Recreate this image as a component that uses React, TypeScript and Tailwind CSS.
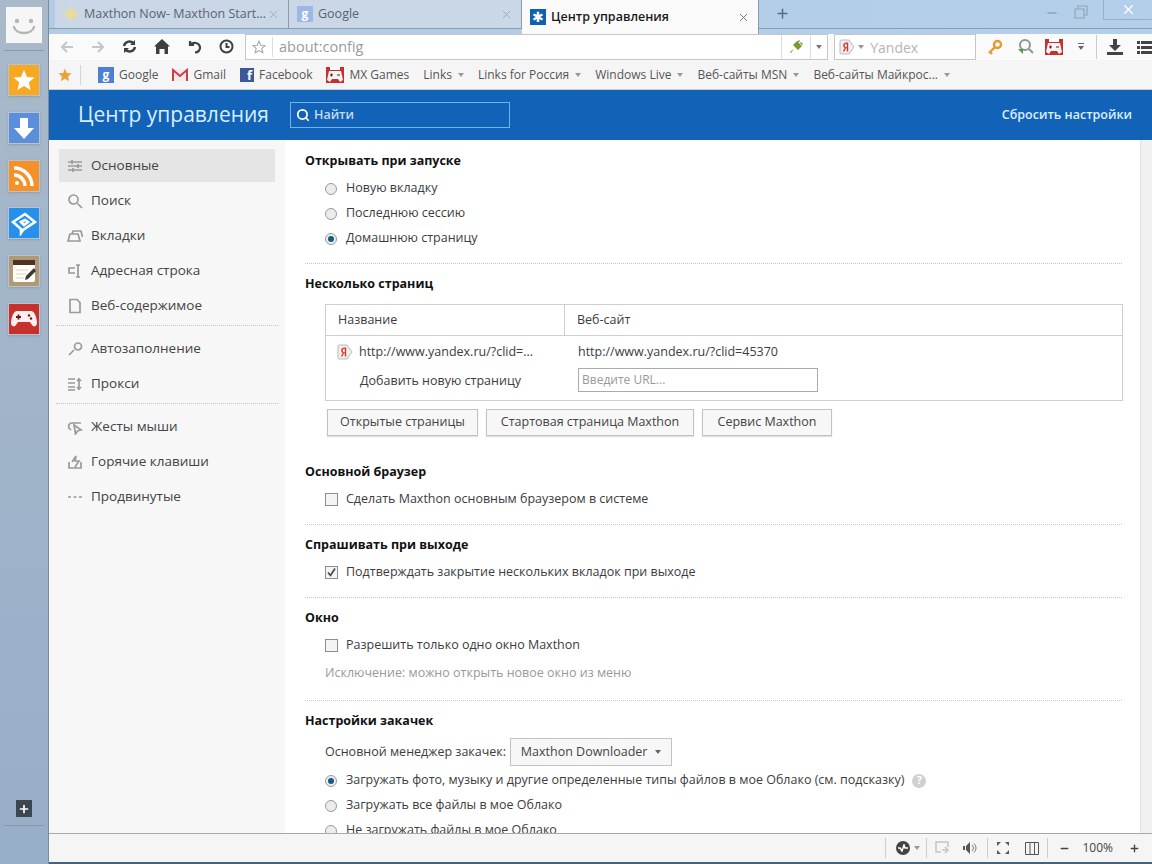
import { ChevronDown, Search, X, Plus, Minus } from 'lucide-react';

const FONT = "font-['Open_Sans','Noto_Sans',sans-serif]";

const Caret = ({ className = 'border-t-[#8a8a8a]' }: { className?: string }) => (
  <span className={`inline-block w-0 h-0 border-x-[3.5px] border-x-transparent border-t-[4px] ${className}`} />
);

const YandexIcon = ({ size = 16 }: { size?: number }) => (
  <svg width={size} height={size} viewBox="0 0 16 16">
    <path d="M1 2.5A1.5 1.5 0 0 1 2.5 1H10l5 7-5 7H2.5A1.5 1.5 0 0 1 1 13.5z" fill="#eee" stroke="#bbb" />
    <path d="M9.2 3.5v9H7.8V9.3H7L5.3 12.5H3.8l1.9-3.5C4.7 8.5 4.2 7.7 4.2 6.5c0-2 1.3-3 3-3zM7.8 4.7h-.5c-1 0-1.6.6-1.6 1.8s.6 1.8 1.6 1.8h.5z" fill="#d8362a" />
  </svg>
);

const MxGames = ({ size = 18 }: { size?: number }) => (
  <svg width={size} height={size} viewBox="0 0 18 18">
    <rect x="0" y="1" width="18" height="16" fill="#c9302c" />
    <rect x="4" y="1" width="10" height="3" fill="#fff" />
    <path d="M3 5h12l2 9-3 2-2-3H6l-2 3-3-2z" fill="#f4f4f4" />
    <path d="M4 9h3M5.5 7.5v3M11 9h3" stroke="#7a1512" strokeWidth="1.2" />
  </svg>
);

const Tab = ({ icon, title, active, width }: { icon: React.ReactNode; title: string; active?: boolean; width: string }) => (
  <div className={`${width} flex items-center pl-2 pr-2 border-r border-[#8d9aa8] ${active ? 'h-[34px] bg-[#fafafa] self-start' : 'h-[28px] bg-[#c9d7e6]'}`}>
    <span className="w-4 h-4 mr-[5px] shrink-0 flex items-center justify-center">{icon}</span>
    <span className={`flex-1 truncate text-[12.5px] ${active ? 'font-semibold text-[#1a1a1a]' : 'text-[#5c6470]'}`}>{title}</span>
    <X size={13} strokeWidth={1.6} className={active ? 'text-[#666]' : 'text-[#9aa5b1]'} />
  </div>
);

const RailIcon = ({ bg, mt, children }: { bg: string; mt: string; children: React.ReactNode }) => (
  <div className={`${bg} ${mt} w-8 h-8 border border-[#b9c3cf] flex items-center justify-center shrink-0 shadow-sm`}>{children}</div>
);

const Bookmark = ({ icon, label, caret }: { icon?: React.ReactNode; label: string; caret?: boolean }) => (
  <div className="flex items-center gap-[5px] text-[12px] text-[#555] whitespace-nowrap">
    {icon}
    <span>{label}</span>
    {caret && <Caret className="border-t-[#999] ml-[1px]" />}
  </div>
);

const SideIcon = ({ d }: { d: string }) => (
  <svg width="16" height="16" viewBox="0 0 16 16" fill="none" stroke="#9a9a9a" strokeWidth="1.7">
    <path d={d} />
  </svg>
);

const SideItem = ({ d, label, active }: { d: string; label: string; active?: boolean }) => (
  <div className={`h-[33px] mb-[2px] flex items-center pl-2 gap-[8px] text-[13.5px] text-[#444] ${active ? 'bg-[#e5e5e5]' : ''}`}>
    <SideIcon d={d} />
    <span>{label}</span>
  </div>
);

const Radio = ({ on, label }: { on?: boolean; label: string }) => (
  <div className="h-[25px] flex items-center pl-[20px] gap-[9px] whitespace-nowrap">
    <span className={`w-3 h-3 rounded-full border border-[#9a9a9a] flex items-center justify-center shrink-0 ${on ? 'bg-[#e8eef2]' : 'bg-[#ececec]'}`}>
      {on && <span className="w-[6px] h-[6px] rounded-full bg-[#175a80]" />}
    </span>
    <span>{label}</span>
  </div>
);

const Check = ({ on, label }: { on?: boolean; label: string }) => (
  <div className="h-[25px] flex items-center pl-[20px] gap-[8px]">
    <span className="w-[13px] h-[13px] border border-[#8e8e8e] bg-[#f4f4f4] flex items-center justify-center shrink-0">
      {on && (
        <svg width="11" height="11" viewBox="0 0 11 11" fill="none" stroke="#444" strokeWidth="1.6">
          <path d="M2 5.5l2.5 3L9 1.5" />
        </svg>
      )}
    </span>
    <span>{label}</span>
  </div>
);

const Title = ({ children }: { children: React.ReactNode }) => (
  <div className="h-[20px] leading-[20px] font-bold text-[#111] text-[12.5px]">{children}</div>
);

const Divider = ({ className }: { className: string }) => <div className={`border-t border-dotted border-[#c4c4c4] mr-[18px] ${className}`} />;

const Btn = ({ label, width }: { label: string; width: string }) => (
  <div className={`${width} h-[27px] flex items-center justify-center border border-[#c2c2c2] bg-[#f7f7f7] shadow-[0_1px_1px_rgba(0,0,0,0.12)] text-[#444]`}>{label}</div>
);

export default function App() {
  return (
    <div className={`${FONT} w-[1152px] h-[864px] overflow-hidden flex bg-white text-[13px] text-[#333]`}>
      {/* left rail */}
      <div className="w-[49px] h-full shrink-0 border-r border-[#7c8a9a] flex flex-col items-center bg-gradient-to-b from-[#a9b9ca] to-[#97aec8]">
        <div className="mt-[7px] w-9 h-9 bg-[#f6f6f6] flex items-center justify-center shrink-0">
          <svg width="30" height="30" viewBox="0 0 30 30" fill="none" stroke="#b5b5b5" strokeWidth="2.4" strokeLinecap="round">
            <circle cx="8" cy="11" r="1" />
            <circle cx="22" cy="11" r="1" />
            <path d="M5 17c2 8 18 8 20 0" />
          </svg>
        </div>
        <div className="mt-[7px] w-10 border-t border-[#8a9aac]" />
        <RailIcon bg="bg-[#f9a91f]" mt="mt-[13px]">
          <svg width="24" height="24" viewBox="0 0 24 24" fill="#fff"><path d="M12 2l3 7 7.5.6-5.7 4.9 1.8 7.4L12 18l-6.6 3.9 1.8-7.4L1.5 9.6 9 9z" /></svg>
        </RailIcon>
        <RailIcon bg="bg-[#5b8fdc]" mt="mt-[16px]">
          <svg width="24" height="24" viewBox="0 0 24 24" fill="#fff"><path d="M8 2h8v10h6L12 23 2 12h6z" /></svg>
        </RailIcon>
        <RailIcon bg="bg-[#f59127]" mt="mt-[16px]">
          <svg width="26" height="26" viewBox="0 0 26 26" fill="none" stroke="#fff" strokeWidth="3.4">
            <circle cx="6" cy="20" r="2" fill="#fff" stroke="none" />
            <path d="M3 12a11 11 0 0 1 11 11M3 5a18 18 0 0 1 18 18" />
          </svg>
        </RailIcon>
        <RailIcon bg="bg-[#2690ea]" mt="mt-[15px]">
          <svg width="26" height="26" viewBox="0 0 26 26" fill="none" stroke="#fff" strokeWidth="2.6">
            <path d="M2 12L14 4l10 8-12 8-2 3v-4z" />
            <path d="M10 12l4-2 3 2-4 3z" />
          </svg>
        </RailIcon>
        <RailIcon bg="bg-[#b09a75]" mt="mt-[16px]">
          <svg width="26" height="26" viewBox="0 0 26 26">
            <rect x="2" y="2" width="22" height="22" rx="2" fill="#fffdf6" />
            <path d="M2 2h22v5H2z" fill="#4a3426" />
            <path d="M5 12h12M5 16h10M5 20h8" stroke="#d9d2c2" />
            <path d="M14 22l1-4 8-8 2 3-8 8z" fill="#3a3a3a" />
          </svg>
        </RailIcon>
        <RailIcon bg="bg-[#c8302c]" mt="mt-[16px]">
          <svg width="28" height="22" viewBox="0 0 28 22">
            <path d="M7 3h14c3 0 5 4 6 11 .5 4-3 6-5 3l-2-3H8l-2 3c-2 3-5.500 1-5-3C2 7 4 3 7 3z" fill="#fbeeee" />
            <path d="M6 9h5M8.500 6.500v5" stroke="#7a1512" strokeWidth="1.8" />
            <circle cx="19" cy="7.500" r="1.200" fill="#7a1512" />
            <circle cx="21" cy="10.500" r="1.200" fill="#7a1512" />
          </svg>
        </RailIcon>
        <div className="mt-auto w-4 h-[17px] bg-[#3c4650] flex items-center justify-center">
          <Plus size={12} strokeWidth={3.4} className="text-white" />
        </div>
        <div className="mt-[8px] w-10 border-t border-[#8a9aac]" />
        <div className="h-[38px]" />
      </div>

      <div className="flex-1 min-w-0 flex flex-col h-full">
        {/* tab strip */}
        <div className="relative h-[34px] shrink-0 flex pl-[6px] bg-gradient-to-r from-[#b3cce6] to-[#b3cfea]">
          <div className="absolute left-0 right-0 top-[28px] border-t border-[#8d9aa8]" />
          <div className="relative flex w-full">
            <Tab
              width="w-[234px]"
              title="Maxthon Now- Maxthon Start Pa..."
              icon={<svg width="16" height="16" viewBox="0 0 16 16"><circle cx="8" cy="8" r="4" fill="#f2dc8c" /><path d="M8 0v3M8 13v3M0 8h3M13 8h3M2.300 2.300l2 2M11.700 11.700l2 2M2.300 13.700l2-2M11.700 4.300l2-2" stroke="#f2dc8c" strokeWidth="1.500" /></svg>}
            />
            <Tab
              width="w-[233px]"
              title="Google"
              icon={<span className="w-4 h-4 bg-[#9db8e8] text-white text-[12px] font-bold flex items-center justify-center">g</span>}
            />
            <Tab
              active
              width="w-[237px]"
              title="Центр управления"
              icon={<span className="w-4 h-4 bg-[#0f5fb5] flex items-center justify-center text-white text-[14px] leading-none">✱</span>}
            />
            <Plus size={15} strokeWidth={2.400} className="ml-[16px] mt-[6px] text-[#5d6b7a]" />
            <div className="ml-auto flex items-start text-[#8fa3b8]">
              <Minus size={14} strokeWidth={2.400} className="mt-[6px]" />
              <svg width="14" height="14" viewBox="0 0 14 14" fill="none" stroke="#8fa3b8" strokeWidth="1.200" className="ml-[15px] mt-[5px]">
                <path d="M1 4h9v9H1zM4 4V1h9v9h-3" />
              </svg>
              <div className="ml-[15px] w-[49px] h-[20px] border-l border-b border-[#98afc6] flex items-center justify-center">
                <X size={15} strokeWidth={2.200} className="text-white" />
              </div>
            </div>
          </div>
        </div>

        {/* nav bar */}
        <div className="h-[26px] shrink-0 flex items-center bg-[#fafafa] pl-[11px]">
          <div className="flex items-center gap-[17px] -mt-[1px]">
            <svg width="14" height="14" viewBox="0 0 14 14" fill="none" stroke="#c4c8cc" strokeWidth="2.200"><path d="M13 7H2M7 2L2 7l5 5" /></svg>
            <svg width="14" height="14" viewBox="0 0 14 14" fill="none" stroke="#c4c8cc" strokeWidth="2.200"><path d="M1 7h11M7 2l5 5-5 5" /></svg>
            <svg width="15" height="15" viewBox="0 0 15 15" fill="none" stroke="#3f3f3f" strokeWidth="2.400"><path d="M2 7a5.500 5.500 0 0 1 10-2M13 8a5.500 5.500 0 0 1-10 2" /><path d="M13 1v5H8zM2 14V9h5z" fill="#3f3f3f" stroke="none" /></svg>
            <svg width="16" height="15" viewBox="0 0 16 15" fill="#3f3f3f"><path d="M8 0l8 7.500h-2V15h-3.500v-5h-5v5H2V7.500H0z" /></svg>
            <svg width="15" height="15" viewBox="0 0 15 15" fill="none" stroke="#3f3f3f" strokeWidth="2.200"><path d="M3 2v4h4M3 6c2-3 9-3 10 2 .5 3-2 5.500-5 5.500" /></svg>
            <svg width="15" height="15" viewBox="0 0 15 15" fill="none" stroke="#3f3f3f" strokeWidth="2"><circle cx="7.500" cy="7.500" r="6" /><path d="M7.500 4v4h3" /></svg>
          </div>
          <div className="ml-[11px] w-[584px] h-[26px] flex items-center border border-[#c6c6c6] bg-white">
            <svg width="14" height="14" viewBox="0 0 24 24" fill="none" stroke="#a5a5a5" strokeWidth="1.800" className="ml-[6px]"><path d="M12 2l3 7 7.500.6-5.700 4.900 1.800 7.400L12 18l-6.600 3.900 1.800-7.400L1.500 9.600 9 9z" /></svg>
            <span className="ml-[6px] h-[20px] border-l border-[#ddd]" />
            <span className="ml-[6px] text-[14.5px] text-[#9a9a9a]">about:config</span>
            <span className="ml-auto h-[24px] border-l border-[#ddd]" />
            <svg width="16" height="16" viewBox="0 0 16 16" className="mx-[6px]" fill="#7c9a31"><path d="M9 2l5 5-4 4-5-5zM6 10l-3 4-1-1 4-3zM11 1l1 1-2 2-1-1zM15 5l-1 1-2-2 1-1z" /></svg>
            <span className="h-[24px] border-l border-[#ddd]" />
            <span className="mx-[5px] flex"><Caret className="border-t-[#777]" /></span>
          </div>
          <div className="ml-[6px] w-[142px] h-[26px] flex items-center border border-[#c6c6c6] bg-white pl-[4px]">
            <YandexIcon />
            <span className="ml-[3px] flex"><Caret className="border-t-[#999]" /></span>
            <span className="ml-[6px] text-[14px] text-[#b5b5b5]">Yandex</span>
          </div>
          <div className="ml-[11px] flex items-center">
            <svg width="16" height="16" viewBox="0 0 16 16" fill="none" stroke="#e59a2d" strokeWidth="2.400"><circle cx="10.500" cy="5.500" r="3.500" /><path d="M8 8l-6 6M3 13l2 2" /></svg>
            <svg width="18" height="18" viewBox="0 0 18 18" fill="none" stroke="#8a9a90" strokeWidth="2" className="ml-[13px]"><circle cx="9" cy="7" r="5" /><path d="M13 11l4 4" /><path d="M2 11h5v5z" fill="#4f9a3c" stroke="none" /></svg>
            <span className="ml-[11px]"><MxGames /></span>
            <svg width="8" height="8" viewBox="0 0 8 8" fill="#666" className="ml-[14px]"><path d="M1 0h6v1H1zM1 3h6L4 7z" /></svg>
            <span className="ml-[11px] h-[24px] border-l border-[#ccc]" />
            <svg width="16" height="16" viewBox="0 0 16 16" fill="#444" className="ml-[10px]"><path d="M6 0h4v6h4l-6 6-6-6h4zM0 13h16v3H0z" /></svg>
            <svg width="15" height="13" viewBox="0 0 15 13" fill="#444" className="ml-[14px]"><path d="M0 0h3v3H0zM4 0h11v3H4zM0 5h3v3H0zM4 5h11v3H4zM0 10h3v3H0zM4 10h11v3H4z" /></svg>
          </div>
        </div>

        {/* bookmarks */}
        <div className="h-[30px] shrink-0 flex items-center gap-[14px] bg-[#f5f5f5] pl-[9px] border-b border-[#c9ced3]">
          <svg width="14" height="14" viewBox="0 0 24 24" fill="#e9a33d" className="-mr-[1px]"><path d="M12 1l3.300 7.500 8 .7-6 5.300 1.800 8L12 18.300 4.900 22.500l1.800-8-6-5.300 8-.7z" /></svg>
          <span className="h-[20px] border-l border-[#d5d5d5] -ml-[5px] mr-[3px]" />
          <Bookmark label="Google" icon={<span className="w-4 h-4 bg-[#4d7fd8] text-white text-[12px] font-bold flex items-center justify-center">g</span>} />
          <Bookmark label="Gmail" icon={<svg width="16" height="14" viewBox="0 0 16 14"><rect y="1" width="16" height="12" fill="#f3eaea" /><path d="M1 13V2l7 6 7-6v11" fill="none" stroke="#cc3d4e" strokeWidth="2" /></svg>} />
          <Bookmark label="Facebook" icon={<span className="w-[14px] h-[14px] bg-[#3b5998] text-white text-[13px] font-bold flex items-end justify-end pr-[2px] leading-none">f</span>} />
          <Bookmark label="MX Games" icon={<MxGames />} />
          <Bookmark label="Links" caret />
          <Bookmark label="Links for Россия" caret />
          <Bookmark label="Windows Live" caret />
          <Bookmark label="Веб-сайты MSN" caret />
          <Bookmark label="Веб-сайты Майкрос..." caret />
        </div>

        {/* header */}
        <div className="h-[50px] shrink-0 bg-[#1262b8] flex items-center pl-[29px] pr-[20px]">
          <span className="w-[212px] text-[21px] text-[#d8efff] whitespace-nowrap">Центр управления</span>
          <div className="w-[220px] h-[26px] border border-[#6db4ea] flex items-center pl-[5px] gap-[4px]">
            <Search size={14} strokeWidth={3} className="text-white" />
            <span className="text-[12.5px] text-[#c4dcf2] font-semibold">Найти</span>
          </div>
          <span className="ml-auto text-[#dcefff] text-[12.5px] font-semibold">Сбросить настройки</span>
        </div>

        {/* body */}
        <div className="flex-1 min-h-0 flex">
          <div className="w-[236px] shrink-0 bg-[#f7f7f7] pl-[10px] pr-[10px] pt-[9px]">
            <SideItem active label="Основные" d="M1 4h14M1 8h14M1 12h14M5 2v4M11 6v4M6 10v4" />
            <SideItem label="Поиск" d="M10.500 10.500L15 15M11 6.500a4.500 4.500 0 1 1-9 0 4.500 4.500 0 0 1 9 0z" />
            <SideItem label="Вкладки" d="M1 13l2-7h8l2 7zM5 6l1-3h8l1.500 6" />
            <SideItem label="Адресная строка" d="M11 2v12M9 2h4M9 14h4M8 5H2v5h6" />
            <SideItem label="Веб-содержимое" d="M3 1.500h7l3 3V14.500H3z" />
            <div className="mt-[3px] mb-[6px] border-t border-dotted border-[#c4c4c4] -mx-[3px]" />
            <SideItem label="Автозаполнение" d="M7 9l-5 5M11 2a3.500 3.500 0 1 1 0 7 3.500 3.500 0 0 1 0-7z" />
            <SideItem label="Прокси" d="M1 3h7M1 7h7M1 11h7M1 14h7M12 2v12M10 5l2-2 2 2M10 11l2 2 2-2" />
            <div className="mt-[3px] mb-[6px] border-t border-dotted border-[#c4c4c4] -mx-[3px]" />
            <SideItem label="Жесты мыши" d="M14 4H5C2 4 1 7 2 9l2 2M7 6l1.500 9 2-3 3.500-1z" />
            <SideItem label="Горячие клавиши" d="M2 8v6h12V8M5 8l4-6-1 5h4l-4 6" />
            <SideItem label="Продвинутые" d="M1 8h3M6.500 8h3M12 8h3" />
          </div>

          <div className="flex-1 min-w-0 overflow-hidden pl-[20px] pt-[11px] text-[#3c3c3c] text-[12.5px]">
            <Title>Открывать при запуске</Title>
            <div className="mt-[5px]">
              <Radio label="Новую вкладку" />
              <Radio label="Последнюю сессию" />
              <Radio on label="Домашнюю страницу" />
            </div>
            <Divider className="mt-[12px] mb-[10px]" />
            <Title>Несколько страниц</Title>
            <div className="ml-[20px] mr-[17px] mt-[10px] border border-[#cfcfcf] h-[97px]">
              <div className="h-[31px] flex items-center border-b border-[#cfcfcf]">
                <span className="w-[239px] h-full flex items-center pl-[12px] border-r border-[#cfcfcf]">Название</span>
                <span className="pl-[12px]">Веб-сайт</span>
              </div>
              <div className="h-[32px] flex items-center">
                <div className="w-[240px] flex items-center pl-[11px] gap-[6px]">
                  <YandexIcon />
                  <span className="truncate w-[179px]">http://www.yandex.ru/?clid=453...</span>
                </div>
                <span className="pl-[12px]">http://www.yandex.ru/?clid=45370</span>
              </div>
              <div className="flex items-start">
                <span className="w-[240px] pl-[34px] leading-[30px] -mt-[2px]">Добавить новую страницу</span>
                <div className="ml-[12px] w-[240px] h-[24px] border border-[#aaa] flex items-center pl-[3px] text-[12px] text-[#999]">Введите URL...</div>
              </div>
            </div>
            <div className="ml-[22px] mt-[8px] flex gap-[8px]">
              <Btn width="w-[151px]" label="Открытые страницы" />
              <Btn width="w-[208px]" label="Стартовая страница Maxthon" />
              <Btn width="w-[130px]" label="Сервис Maxthon" />
            </div>
            <div className="mt-[26px]"><Title>Основной браузер</Title></div>
            <div className="mt-[5px]"><Check label="Сделать Maxthon основным браузером в системе" /></div>
            <Divider className="mt-[12px] mb-[10px]" />
            <Title>Спрашивать при выходе</Title>
            <div className="mt-[5px]"><Check on label="Подтверждать закрытие нескольких вкладок при выходе" /></div>
            <Divider className="mt-[12px] mb-[10px]" />
            <Title>Окно</Title>
            <div className="mt-[5px]"><Check label="Разрешить только одно окно Maxthon" /></div>
            <div className="pl-[20px] h-[29px] leading-[29px] text-[#999]">Исключение: можно открыть новое окно из меню</div>
            <Divider className="mt-[13px] mb-[10px]" />
            <Title>Настройки закачек</Title>
            <div className="pl-[20px] mt-[7px] h-[28px] flex items-center gap-[4px]">
              <span>Основной менеджер закачек:</span>
              <div className="w-[162px] h-[28px] border border-[#c2c2c2] bg-[#f7f7f7] flex items-center justify-center gap-[8px] text-[#444]">
                Maxthon Downloader <Caret className="border-t-[#666]" />
              </div>
            </div>
            <div className="mt-[2px]">
              <div className="flex items-center">
                <Radio on label="Загружать фото, музыку и другие определенные типы файлов в мое Облако (см. подсказку)" />
                <span className="ml-[8px] w-[14px] h-[14px] rounded-full bg-[#d0d0d0] text-white text-[11px] font-bold flex items-center justify-center">?</span>
              </div>
              <Radio label="Загружать все файлы в мое Облако" />
              <Radio label="Не загружать файлы в мое Облако" />
            </div>
          </div>

          <div className="w-[12px] shrink-0 bg-[#f1f1f1] border-l border-[#e2e2e2]" />
        </div>

        {/* status bar */}
        <div className="h-[29px] shrink-0 border-t border-[#a8a8a8] bg-[#f5f5f5] flex items-center justify-end pr-[12px] text-[#444]">
          <span className="h-[20px] border-l border-[#ccc]" />
          <span className="ml-[10px] w-[14px] h-[14px] rounded-full bg-[#444] flex items-center justify-center">
            <svg width="10" height="8" viewBox="0 0 10 8" fill="none" stroke="#fff" strokeWidth="1.500"><path d="M0 4h2l2 3 2-6 1 3h3" /></svg>
          </span>
          <span className="ml-[4px] flex"><Caret className="border-t-[#999]" /></span>
          <span className="ml-[6px] h-[20px] border-l border-[#ccc]" />
          <svg width="14" height="14" viewBox="0 0 14 14" fill="none" stroke="#c4c4c4" strokeWidth="1.500" className="ml-[8px]"><path d="M13 6V1H1v10h5M7 9h6M10 6l3 3-3 3" /></svg>
          <svg width="16" height="12" viewBox="0 0 16 12" fill="#555" className="ml-[14px]"><path d="M0 4h2v4H0zM3 4l4-4v12L3 8z" /><path d="M9 3a4 4 0 0 1 0 6M11 1.500a6 6 0 0 1 0 9" fill="none" stroke="#777" /></svg>
          <span className="ml-[8px] h-[20px] border-l border-[#ccc]" />
          <svg width="12" height="12" viewBox="0 0 12 12" fill="#555" className="ml-[9px]"><path d="M0 0h4L0 4zM12 0v4L8 0zM0 12V8l4 4zM12 12H8l4-4z" /></svg>
          <svg width="14" height="13" viewBox="0 0 14 13" fill="none" stroke="#555" className="ml-[16px]"><path d="M.5.500h13v12H.500zM5 .5v12M9.500.5v12" /></svg>
          <span className="ml-[8px] h-[20px] border-l border-[#ccc]" />
          <Minus size={11} strokeWidth={3} className="ml-[11px]" />
          <span className="ml-[12px] text-[12px]">100%</span>
          <Plus size={11} strokeWidth={3} className="ml-[16px]" />
        </div>
        <div className="h-[2px] shrink-0 bg-[#45627f]" />
      </div>
    </div>
  );
}
